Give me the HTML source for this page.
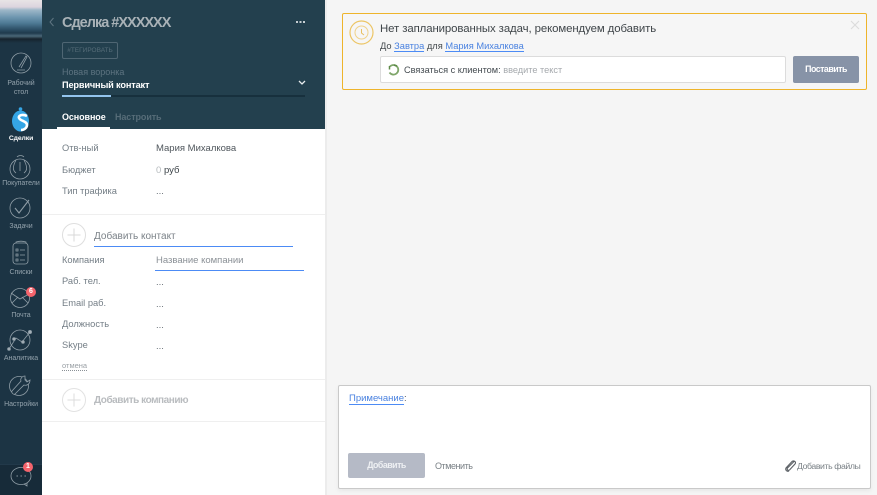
<!DOCTYPE html>
<html><head><meta charset="utf-8"><style>
html,body{margin:0;padding:0;width:877px;height:495px;overflow:hidden;background:#f5f5f5;font-family:"Liberation Sans","DejaVu Sans",sans-serif}
div,a,span.a{position:absolute;white-space:nowrap}
.n{left:0;width:42px;text-align:center;font-size:7px;line-height:9px;color:#93a2ac;letter-spacing:-.05px}
.l{left:62px;font-size:9.300px;color:#747e86;line-height:12px}
.v{left:156px;font-size:9.500px;color:#666e75;line-height:12px}
svg{position:absolute}
a.u{color:#4a82e0;text-decoration:none;border-bottom:1px solid #4c8bf5;line-height:11px}
</style></head><body>
<div style="left:0;top:0;width:42px;height:495px;background:#1c3444"></div>
<div style="left:0;top:0;width:42px;height:43px;background:linear-gradient(#e8e4e6 0,#dcd4de 7px,#9db7c8 10px,#6f97b0 17px,#4f7b96 23px,#2f5269 29px,#1f3a4c 33px,#4a6778 36px,#16232d 39px,#1c3444 43px)"></div>
<div style="left:0;top:464px;width:42px;height:31px;background:#172b39;border-top:1px solid #22394a;box-sizing:border-box"></div>

<svg style="left:0;top:0" width="42" height="495" fill="none" stroke="#8f9da6" stroke-width=".8">
<circle cx="21" cy="63" r="10"/><path d="M19 67l7-11 1 1-6 11M17 70h8"/>
<ellipse cx="20.500" cy="121" rx="8.500" ry="10.500" fill="#35a5e5" stroke="none"/><circle cx="20.500" cy="109" r="1.800" fill="#35a5e5" stroke="none"/><path d="M27 116c-4-2-9-1-8 2s8 3 8 7c0 3-3 5-6 5" stroke="#fff" stroke-width="2.600"/>
<circle cx="20" cy="169" r="10"/><path d="M16 160c-3 6-4 10 0 13M24 160c3 6 4 10 0 13M17 157c2-2 5-2 7 0M20 162v9"/>
<circle cx="20" cy="208" r="10"/><path d="M15 208l4 5 10-13" stroke-width="1.100"/>
<rect x="13" y="243" width="15" height="21" rx="3"/><path d="M16 243v-1c3-1 7-1 10 0v1M16 249h2v2h-2zM20 250h5M16 254h2v2h-2zM20 255h5M16 259h2v2h-2zM20 260h5"/>
<circle cx="20" cy="298" r="9.500"/><path d="M11 293l9 6 9-5M12 303l6-6M28 303l-6-6"/>
<circle cx="20" cy="340" r="10"/><path d="M9 349l7-11 6 4 8-10"/><circle cx="14" cy="339" r="1.400" fill="#a4b0b8"/><circle cx="23" cy="342" r="1.400" fill="#a4b0b8"/><circle cx="30" cy="332" r="1.600" fill="#a4b0b8"/><circle cx="9" cy="349" r="1.400" fill="#a4b0b8"/>
<circle cx="19" cy="386" r="9.500"/><path d="M25 376c-3 0-5 3-4 5l-9 10c-1 2 2 4 3 3l9-9c3 1 6-1 6-5l-3 2-2-2z" fill="#1c3444"/>
<ellipse cx="21" cy="476" rx="10" ry="8.500"/><path d="M24 484l3 2v-3"/><path d="M16.500 476h1.400M20.500 476h1.400M24.500 476h1.400" stroke-width="1"/>
</svg>
<div class="n" style="top:79px">Рабочий<br>стол</div>
<div class="n" style="top:134px;color:#fff;font-weight:bold;font-size:6.800px;letter-spacing:-.1px">Сделки</div>
<div class="n" style="top:179px">Покупатели</div>
<div class="n" style="top:222px">Задачи</div>
<div class="n" style="top:268px">Списки</div>
<div class="n" style="top:311px">Почта</div>
<div class="n" style="top:354px">Аналитика</div>
<div class="n" style="top:400px">Настройки</div>
<div style="left:26px;top:287px;width:10px;height:10px;border-radius:50%;background:#f4636c;color:#fff;font-size:7px;font-weight:bold;line-height:10px;text-align:center">6</div>
<div style="left:23px;top:462px;width:10px;height:10px;border-radius:50%;background:#f4636c;color:#fff;font-size:7px;font-weight:bold;line-height:10px;text-align:center">1</div>

<div style="left:42px;top:0;width:283px;height:495px;background:#fff"></div>
<div style="left:325px;top:0;width:2px;height:495px;background:#ececec"></div>
<div style="left:42px;top:0;width:283px;height:129px;background:#23404e"></div>
<svg style="left:48px;top:17px" width="8" height="10" fill="none" stroke="#5f7582"><path d="M5.500 1l-3.500 4 3.500 4"/></svg>
<div style="left:62px;top:13px;font-size:14.500px;line-height:20px;font-weight:bold;color:#a9b2b7;letter-spacing:-1px">Сделка #XXXXXX</div>
<div style="left:296px;top:21px;width:2px;height:1.500px;background:#c6ced2;box-shadow:3.500px 0 #c6ced2,7px 0 #c6ced2"></div>
<div style="left:62px;top:42px;width:54px;height:15px;border:1px solid #4f6673;border-radius:2px;color:#566c78;font-size:6.500px;line-height:15px;text-align:center">#ТЕГИРОВАТЬ</div>
<div style="left:62px;top:66px;font-size:9px;line-height:12px;color:#5d7380">Новая воронка</div>
<div style="left:62px;top:79px;font-size:9.200px;line-height:12px;color:#fff;font-weight:bold;letter-spacing:-.15px">Первичный контакт</div>
<svg style="left:298px;top:79px" width="8" height="7" fill="none" stroke="#e8ecee" stroke-width="1.300"><path d="M1 2l3 3 3-3"/></svg>
<div style="left:62px;top:95px;width:243px;height:2px;background:#17303d"></div>
<div style="left:62px;top:95px;width:49px;height:2px;background:#94c5ee"></div>
<div style="left:62px;top:111px;font-size:9px;line-height:12px;color:#fff;font-weight:bold;letter-spacing:-.1px">Основное</div>
<div style="left:115px;top:111px;font-size:9px;line-height:12px;color:#566c78;font-weight:bold;letter-spacing:-.1px">Настроить</div>
<div style="left:57px;top:127px;width:53px;height:2px;background:#fff"></div>

<div class="l" style="top:142px">Отв-ный</div><div class="v" style="top:143px;color:#4f565c">Мария Михалкова</div>
<div class="l" style="top:164px">Бюджет</div><div class="v" style="top:165px;color:#b5babd">0 <span style="color:#3e454a">руб</span></div>
<div class="l" style="top:185px">Тип трафика</div><div class="v" style="top:186px">...</div>
<div style="left:42px;top:214px;width:283px;height:1px;background:#efefef"></div>
<div style="left:62px;top:223px;width:22px;height:22px;border:1px solid #dedede;border-radius:50%"></div>
<svg style="left:62px;top:223px" width="24" height="24" stroke="#d8d8d8"><path d="M12 5.500v13M5.500 12h13"/></svg>
<div style="left:94px;top:230px;font-size:10px;line-height:13px;color:#7b8288">Добавить контакт</div>
<div style="left:94px;top:246px;width:199px;height:1px;background:#4c8bf5"></div>
<div class="l" style="top:254px">Компания</div><div class="v" style="top:255px;color:#8a9096">Название компании</div>
<div style="left:155px;top:270px;width:149px;height:1px;background:#4c8bf5"></div>
<div class="l" style="top:275px">Раб. тел.</div><div class="v" style="top:277px">...</div>
<div class="l" style="top:297px">Email раб.</div><div class="v" style="top:299px">...</div>
<div class="l" style="top:318px">Должность</div><div class="v" style="top:320px">...</div>
<div class="l" style="top:339px">Skype</div><div class="v" style="top:341px">...</div>
<div style="left:62px;top:361px;font-size:7.500px;line-height:9px;color:#9aa0a5;border-bottom:1px dotted #8a9096">отмена</div>
<div style="left:42px;top:379px;width:283px;height:1px;background:#efefef"></div>
<div style="left:62px;top:388px;width:22px;height:22px;border:1px solid #e2e2e2;border-radius:50%"></div>
<svg style="left:62px;top:388px" width="24" height="24" stroke="#dcdcdc"><path d="M12 5.500v13M5.500 12h13"/></svg>
<div style="left:94px;top:394px;font-size:10px;line-height:13px;color:#b9bcbf;font-weight:bold;letter-spacing:-.45px">Добавить компанию</div>
<div style="left:42px;top:421px;width:283px;height:1px;background:#efefef"></div>

<div style="left:342px;top:13px;width:523px;height:75px;border:1px solid #eeb42b;border-radius:2px;background:#f6f6f6"></div>
<svg style="left:349px;top:20px" width="25" height="25" fill="none" stroke="#ecc565"><circle cx="12.500" cy="12.500" r="11.500" stroke-width="1.200"/><circle cx="12.500" cy="12.500" r="6.500" stroke="#f0d28a"/><path d="M12.500 9v4l2.500 2" stroke="#e8c061"/></svg>
<div style="left:380px;top:22px;font-size:11.400px;line-height:15px;color:#3f4549;letter-spacing:-.09px">Нет запланированных задач, рекомендуем добавить</div>
<div style="left:380px;top:40px;font-size:9.300px;line-height:12px;color:#444a4e">До <a class="u" style="position:static">Завтра</a> для <a class="u" style="position:static">Мария Михалкова</a></div>
<svg style="left:850px;top:20px" width="10" height="10" stroke="#dcdcdc" stroke-width="1.200"><path d="M1 1l8 8M9 1l-8 8"/></svg>
<div style="left:380px;top:56px;width:404px;height:25px;border:1px solid #dcdcdc;border-radius:2px;background:#fff"></div>
<svg style="left:387px;top:63px" width="13" height="13" fill="none" stroke-width="1.800"><path d="M3 3.500a4.800 4.800 0 1 1-.5 6" stroke="#7fa66a"/><path d="M2.500 3v3.500M7 2l3 1" stroke="#5e8a49" stroke-width="1.500"/></svg>
<div style="left:404px;top:64px;font-size:9.200px;line-height:12px;color:#444b50">Связаться с клиентом: <span style="color:#a5a9ad">введите текст</span></div>
<div style="left:793px;top:56px;width:66px;height:27px;border-radius:2px;background:#8793a7;color:#fff;font-size:8.800px;line-height:27px;text-align:center;font-weight:bold;letter-spacing:-.5px">Поставить</div>

<div style="left:338px;top:385px;width:531px;height:102px;border:1px solid #c9c9c9;border-radius:2px;background:#fff;box-shadow:0 2px 5px rgba(0,0,0,.06)"></div>
<div style="left:349px;top:393px;font-size:9.500px;line-height:12px;color:#555"><a class="u" style="position:static">Примечание</a>:</div>
<div style="left:348px;top:453px;width:77px;height:25px;border-radius:2px;background:#b5bac6;color:#eef0f3;font-size:8.800px;line-height:25px;text-align:center;font-weight:bold;letter-spacing:-.5px">Добавить</div>
<div style="left:435px;top:460px;font-size:9px;line-height:12px;color:#7a8186;letter-spacing:-.45px">Отменить</div>
<svg style="left:784px;top:459px" width="12" height="13" fill="none" stroke="#5c6166" stroke-width="1.100"><path d="M10 2.500l-6.500 6.500c-1.200 1.500.8 3 2 2l5.500-6c1.500-2-1-4-3-2.500l-6 6.500c-1 2 1 4 3 3"/></svg>
<div style="left:797px;top:460px;font-size:8.700px;line-height:12px;color:#7a8186;letter-spacing:-.4px">Добавить файлы</div>
</body></html>
